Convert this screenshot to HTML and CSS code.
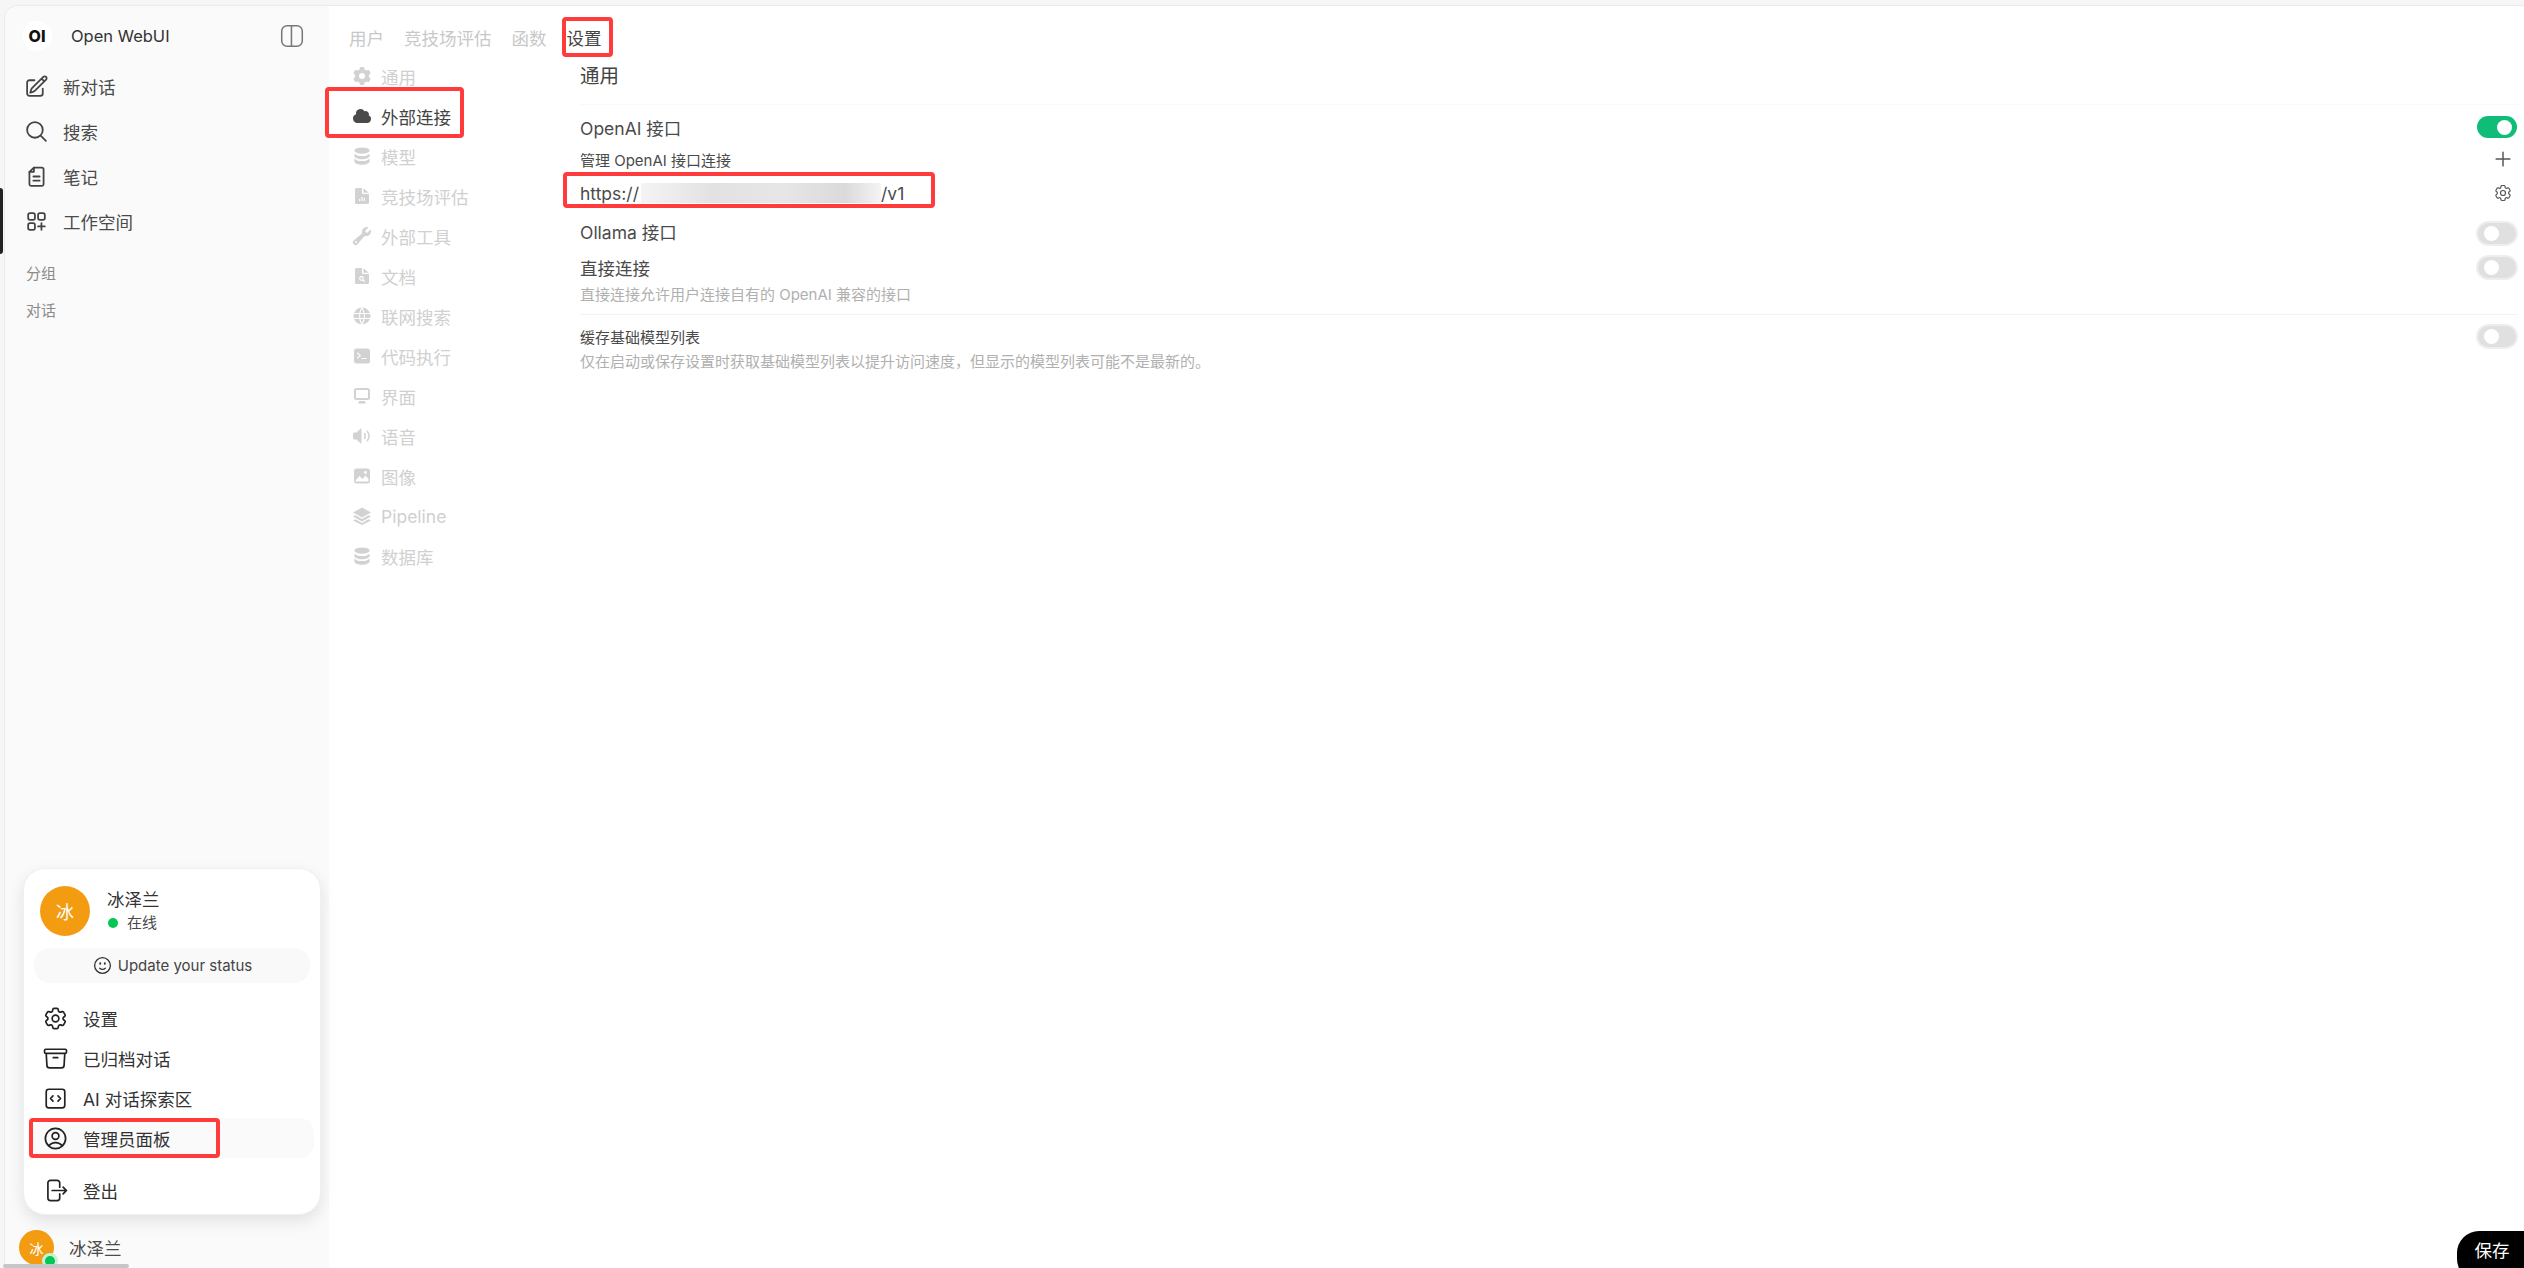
FILE: index.html
```html
<!DOCTYPE html>
<html lang="zh-CN">
<head>
<meta charset="utf-8">
<title>Open WebUI</title>
<link rel="stylesheet" href="styles.css">
</head>
<body>
<svg class="defs" width="0" height="0" aria-hidden="true">
  <symbol id="o-cog" viewBox="0 0 24 24"><path d="M9.594 3.94c.09-.542.56-.94 1.11-.94h2.593c.55 0 1.02.398 1.11.94l.213 1.281c.063.374.313.686.645.87.074.04.147.083.22.127.325.196.72.257 1.075.124l1.217-.456a1.125 1.125 0 0 1 1.37.49l1.296 2.247a1.125 1.125 0 0 1-.26 1.431l-1.003.827c-.293.241-.438.613-.43.992a7.723 7.723 0 0 1 0 .255c-.008.378.137.75.43.991l1.004.827c.424.35.534.955.26 1.43l-1.298 2.247a1.125 1.125 0 0 1-1.369.491l-1.217-.456c-.355-.133-.75-.072-1.076.124a6.47 6.47 0 0 1-.22.128c-.331.183-.581.495-.644.869l-.213 1.281c-.09.543-.56.94-1.11.94h-2.594c-.55 0-1.019-.398-1.11-.94l-.213-1.281c-.062-.374-.312-.686-.644-.87a6.52 6.52 0 0 1-.22-.127c-.325-.196-.72-.257-1.076-.124l-1.217.456a1.125 1.125 0 0 1-1.369-.49l-1.297-2.247a1.125 1.125 0 0 1 .26-1.431l1.004-.827c.292-.24.437-.613.43-.991a6.932 6.932 0 0 1 0-.255c.007-.38-.138-.751-.43-.992l-1.004-.827a1.125 1.125 0 0 1-.26-1.43l1.297-2.247a1.125 1.125 0 0 1 1.37-.491l1.216.456c.356.133.751.072 1.076-.124.072-.044.146-.086.22-.128.332-.183.582-.495.644-.869l.214-1.28Z"/><path d="M15 12a3 3 0 1 1-6 0 3 3 0 0 1 6 0Z"/></symbol>
  <symbol id="s-db" viewBox="0 0 20 20"><ellipse cx="10" cy="4.6" rx="7.6" ry="3.2"/><path d="M2.4 7.4c1.2 1.7 4 2.6 7.6 2.6s6.4-.9 7.6-2.6v2.5c0 1.8-3.4 3.3-7.6 3.3s-7.6-1.5-7.6-3.3Z"/><path d="M2.4 12.4c1.2 1.7 4 2.6 7.6 2.6s6.4-.9 7.6-2.6v3c0 1.8-3.4 3.3-7.6 3.3s-7.6-1.5-7.6-3.3Z"/></symbol>
  <symbol id="s-doc" viewBox="0 0 20 20"><path d="M3 3.5A1.5 1.5 0 0 1 4.5 2h5.5v4.5A1.5 1.5 0 0 0 11.500 8H17v8.500a1.500 1.500 0 0 1-1.500 1.500h-11A1.500 1.500 0 0 1 3 16.500Z"/><path d="M11.500 2.300 16.700 6.700H11.500Z"/></symbol>
</svg>

<div class="scrollbar"></div>
<div class="edge-bar"></div>

<div class="shell">
  <aside class="sidebar">
    <header class="brand">
      <span class="logo">OI</span>
      <span class="brand-name">Open WebUI</span>
      <svg class="panel-icon" viewBox="0 0 24 24" fill="none" stroke="#777" stroke-width="1.4"><rect x="2.500" y="2.500" width="19" height="19" rx="5"/><path d="M11.500 2.500v19"/></svg>
    </header>
    <nav class="side-nav">
      <a class="side-link"><svg class="side-icon" viewBox="0 0 24 24"><path d="m16.862 4.487 1.687-1.688a1.875 1.875 0 1 1 2.652 2.652L10.582 16.07a4.500 4.500 0 0 1-1.897 1.13L6 18l.8-2.685a4.500 4.500 0 0 1 1.130-1.897l8.932-8.931Zm0 0L19.500 7.125M18 14v4.750A2.250 2.250 0 0 1 15.750 21H5.250A2.250 2.250 0 0 1 3 18.750V8.250A2.250 2.250 0 0 1 5.250 6H10"/></svg>新对话</a>
      <a class="side-link"><svg class="side-icon" viewBox="0 0 24 24"><path d="m21 21-5.197-5.197m0 0A7.500 7.500 0 1 0 5.196 5.196a7.500 7.500 0 0 0 10.607 10.607Z"/></svg>搜索</a>
      <a class="side-link"><svg class="side-icon" viewBox="0 0 24 24"><path d="M9.500 3.500H17a1.800 1.800 0 0 1 1.800 1.800v14a1.800 1.800 0 0 1-1.800 1.800H7a1.800 1.800 0 0 1-1.800-1.800V7.500ZM9 12h6M9 16h6"/><path d="M9.500 3.500V7.500H5.200"/></svg>笔记</a>
      <a class="side-link"><svg class="side-icon" viewBox="0 0 24 24"><rect x="4" y="4" width="6.500" height="6.500" rx="1.800"/><rect x="13.500" y="4" width="6.500" height="6.500" rx="1.800"/><rect x="4" y="13.500" width="6.500" height="6.500" rx="1.800"/><path d="M16.750 13.500V20M13.500 16.750H20"/></svg>工作空间</a>
    </nav>
    <div class="side-label first">分组</div>
    <div class="side-label">对话</div>
    <footer class="side-user">
      <span class="avatar-small">冰<i class="avatar-dot"></i></span>
      <span>冰泽兰</span>
    </footer>

    <div class="user-menu">
      <div class="menu-head">
        <span class="avatar-large">冰</span>
        <div class="menu-id">
          <div class="menu-name">冰泽兰</div>
          <div class="menu-status"><i class="status-dot"></i>在线</div>
        </div>
      </div>
      <div class="status-btn"><svg class="status-icon" viewBox="0 0 24 24"><path d="M15.182 15.182a4.500 4.500 0 0 1-6.364 0M21 12a9 9 0 1 1-18 0 9 9 0 0 1 18 0ZM9.750 9.750c0 .414-.168.750-.375.750S9 10.164 9 9.750 9.168 9 9.375 9s.375.336.375.750Zm5.250 0c0 .414-.168.750-.375.750s-.375-.336-.375-.750.168-.750.375-.750.375.336.375.750Z"/></svg>Update your status</div>
      <div class="menu-list">
        <a class="menu-item"><svg class="menu-icon"><use href="#o-cog"/></svg>设置</a>
        <a class="menu-item"><svg class="menu-icon" viewBox="0 0 24 24"><path d="m20.250 7.500-.625 10.632a2.250 2.250 0 0 1-2.247 2.118H6.622a2.250 2.250 0 0 1-2.247-2.118L3.750 7.500M10 11.250h4M3.375 7.500h17.250c.621 0 1.125-.504 1.125-1.125v-1.500c0-.621-.504-1.125-1.125-1.125H3.375c-.621 0-1.125.504-1.125 1.125v1.500c0 .621.504 1.125 1.125 1.125Z"/></svg>已归档对话</a>
        <a class="menu-item"><svg class="menu-icon" viewBox="0 0 24 24"><path d="M14.250 9.750 16.500 12l-2.250 2.250m-4.500 0L7.500 12l2.250-2.250M6 20.250h12A2.250 2.250 0 0 0 20.250 18V6A2.250 2.250 0 0 0 18 3.750H6A2.250 2.250 0 0 0 3.750 6v12A2.250 2.250 0 0 0 6 20.250Z"/></svg>AI 对话探索区</a>
        <a class="menu-item hover"><svg class="menu-icon" viewBox="0 0 24 24"><path d="M17.982 18.725A7.488 7.488 0 0 0 12 15.750a7.488 7.488 0 0 0-5.982 2.975m11.963 0a9 9 0 1 0-11.963 0m11.963 0A8.966 8.966 0 0 1 12 21a8.966 8.966 0 0 1-5.982-2.275M15 9.750a3 3 0 1 1-6 0 3 3 0 0 1 6 0Z"/></svg>管理员面板</a>
        <a class="menu-item logout"><svg class="menu-icon" viewBox="0 0 24 24"><path d="M15.750 9V5.250A2.250 2.250 0 0 0 13.500 3h-6a2.250 2.250 0 0 0-2.250 2.250v13.500A2.250 2.250 0 0 0 7.500 21h6a2.250 2.250 0 0 0 2.250-2.250V15m3 0 3-3m0 0-3-3m3 3H9"/></svg>登出</a>
      </div>
    </div>
  </aside>

  <main class="main">
    <nav class="tabs">
      <a class="tab">用户</a>
      <a class="tab">竞技场评估</a>
      <a class="tab">函数</a>
      <a class="tab active">设置</a>
    </nav>
    <div class="settings">
      <nav class="settings-nav">
        <a class="set-link"><svg class="set-icon" viewBox="0 0 20 20"><path fill-rule="evenodd" d="M7.840 1.804A1 1 0 0 1 8.820 1h2.360a1 1 0 0 1 .98.804l.331 1.652a6.993 6.993 0 0 1 1.929 1.115l1.598-.54a1 1 0 0 1 1.186.447l1.180 2.044a1 1 0 0 1-.205 1.251l-1.267 1.113a7.047 7.047 0 0 1 0 2.228l1.267 1.113a1 1 0 0 1 .206 1.250l-1.180 2.045a1 1 0 0 1-1.187.447l-1.598-.54a6.993 6.993 0 0 1-1.929 1.115l-.33 1.652a1 1 0 0 1-.98.804H8.820a1 1 0 0 1-.98-.804l-.331-1.652a6.993 6.993 0 0 1-1.929-1.115l-1.598.54a1 1 0 0 1-1.186-.447l-1.180-2.044a1 1 0 0 1 .205-1.251l1.267-1.114a7.050 7.050 0 0 1 0-2.227L1.821 7.773a1 1 0 0 1-.206-1.250l1.180-2.045a1 1 0 0 1 1.187-.447l1.598.54A6.992 6.992 0 0 1 7.510 3.456l.33-1.652ZM10 13a3 3 0 1 0 0-6 3 3 0 0 0 0 6Z"/></svg>通用</a>
        <a class="set-link active"><svg class="set-icon" viewBox="0 0 20 20"><path d="M1 12.500A4.500 4.500 0 0 0 5.500 17H15a4 4 0 0 0 1.866-7.539 3.504 3.504 0 0 0-4.504-4.272A4.500 4.500 0 0 0 4.060 8.235 4.502 4.502 0 0 0 1 12.500Z"/></svg>外部连接</a>
        <a class="set-link"><svg class="set-icon"><use href="#s-db"/></svg>模型</a>
        <a class="set-link"><svg class="set-icon" viewBox="0 0 20 20"><use href="#s-doc"/><path class="cut" d="M7 15v-2h1.200v2ZM9.400 15v-4h1.200v4ZM11.800 15v-3H13v3Z"/></svg>竞技场评估</a>
        <a class="set-link"><svg class="set-icon" viewBox="0 0 20 20"><path fill-rule="evenodd" d="M19 5.500a4.500 4.500 0 0 1-4.791 4.490c-.873-.055-1.808.128-2.368.8l-6.024 7.230a2.724 2.724 0 1 1-3.837-3.837L9.210 8.160c.672-.56.855-1.495.8-2.368a4.500 4.500 0 0 1 5.873-4.575c.324.105.39.51.15.752L13.340 4.660a.455.455 0 0 0-.11.494 3.010 3.010 0 0 0 1.617 1.617c.17.07.363.02.493-.111l2.692-2.692c.241-.241.647-.174.752.15.14.435.216.9.216 1.382ZM4 17a1 1 0 1 0 0-2 1 1 0 0 0 0 2Z"/></svg>外部工具</a>
        <a class="set-link"><svg class="set-icon" viewBox="0 0 20 20"><use href="#s-doc"/><circle class="cut-ring" cx="9.500" cy="12.500" r="1.800"/><path class="cut-line" d="m11 14 1.500 1.500"/></svg>文档</a>
        <a class="set-link"><svg class="set-icon" viewBox="0 0 20 20"><circle cx="10" cy="10" r="8.500"/><path class="cut-line" d="M2 7.500h16M2 12.500h16M10 1.500c-3.200 5-3.200 12 0 17M10 1.500c3.200 5 3.200 12 0 17"/></svg>联网搜索</a>
        <a class="set-link"><svg class="set-icon" viewBox="0 0 20 20"><rect x="2" y="2.500" width="16" height="15" rx="2.500"/><path class="cut-line" d="m5.500 7 2.800 2.500-2.800 2.500M10 12.500h4"/></svg>代码执行</a>
        <a class="set-link"><svg class="set-icon" viewBox="0 0 20 20"><path fill-rule="evenodd" d="M4.500 2A2.500 2.500 0 0 0 2 4.500v7A2.500 2.500 0 0 0 4.500 14h11a2.500 2.500 0 0 0 2.500-2.500v-7A2.500 2.500 0 0 0 15.500 2ZM4.500 4h11a.5.5 0 0 1 .5.5v7a.5.5 0 0 1-.5.5h-11a.5.5 0 0 1-.5-.5v-7a.5.5 0 0 1 .5-.5Z"/><path d="M7 15h6l.8 2.500H6.200Z"/></svg>界面</a>
        <a class="set-link"><svg class="set-icon" viewBox="0 0 20 20"><path d="M9.500 3.200v13.600c0 .6-.7.9-1.100.5L4.500 13.500H2.500A1.500 1.500 0 0 1 1 12V8a1.500 1.500 0 0 1 1.500-1.500h2l3.900-3.800c.4-.4 1.100-.1 1.100.5Z"/><path class="speaker-wave" d="M12.500 7.500c1 1.500 1 3.500 0 5M15.300 5.200c2.200 3 2.200 6.600 0 9.600"/></svg>语音</a>
        <a class="set-link"><svg class="set-icon" viewBox="0 0 20 20"><rect x="2" y="2.500" width="16" height="15" rx="2.500"/><path class="cut" d="M3.500 14.500 7.500 10l3 3 3-3.500 3 3.500v2.500h-13Z"/><circle class="cut" cx="13.500" cy="6.500" r="1.400"/></svg>图像</a>
        <a class="set-link"><svg class="set-icon" viewBox="0 0 20 20"><path d="M10 1.500 19 6.500 10 11.500 1 6.500Z"/><path d="m3.500 9.300 6.500 3.600 6.500-3.600L19 10.500 10 15.500 1 10.500Z"/><path d="m3.500 13.300 6.500 3.600 6.500-3.600L19 14.500 10 19 1 14.500Z"/></svg>Pipeline</a>
        <a class="set-link"><svg class="set-icon"><use href="#s-db"/></svg>数据库</a>
      </nav>

      <section class="panel">
        <h2 class="panel-title">通用</h2>
        <hr class="rule">
        <div class="row row-openai">
          <span>OpenAI 接口</span>
          <span class="toggle on"><i></i></span>
        </div>
        <div class="row row-manage">
          <span class="small">管理 OpenAI 接口连接</span>
          <svg class="action-icon" viewBox="0 0 24 24"><path d="M12 4.500v15m7.500-7.500h-15"/></svg>
        </div>
        <div class="row row-url">
          <span class="url">https://<span class="masked"></span>/v1</span>
          <svg class="action-icon gear"><use href="#o-cog"/></svg>
        </div>
        <div class="row row-ollama">
          <span>Ollama 接口</span>
          <span class="toggle"><i></i></span>
        </div>
        <div class="row row-direct">
          <span>直接连接</span>
          <span class="toggle"><i></i></span>
        </div>
        <p class="hint hint-direct">直接连接允许用户连接自有的 OpenAI 兼容的接口</p>
        <hr class="rule rule-second">
        <div class="row row-cache">
          <span class="small">缓存基础模型列表</span>
          <span class="toggle"><i></i></span>
        </div>
        <p class="hint hint-cache">仅在启动或保存设置时获取基础模型列表以提升访问速度，但显示的模型列表可能不是最新的。</p>
      </section>
    </div>
    <button class="save">保存</button>
  </main>
</div>

<div class="mark mark-tab"></div>
<div class="mark mark-nav"></div>
<div class="mark mark-url"></div>
<div class="mark mark-admin"></div>
</body>
</html>
```

FILE: styles.css
```css
* { box-sizing: border-box; }
html, body { margin: 0; height: 100%; }
body {
  position: relative;
  width: 2524px;
  height: 1268px;
  overflow: hidden;
  background: #f6f6f6;
  color: #4a4a4a;
  font-family: Inter, "Noto Sans CJK SC", "Noto Sans", sans-serif;
  font-size: 17.5px;
}
.defs { position: absolute; }
a { color: inherit; text-decoration: none; }

.shell {
  display: flex;
  height: 1263px;
  margin: 5px 0 0 4px;
  background: #fff;
  border-top: 1px solid #ebebeb;
  border-left: 1px solid #ebebeb;
  border-top-left-radius: 14px;
}
.sidebar {
  position: relative;
  display: flex;
  flex-direction: column;
  width: 324px;
  flex: none;
  background: #fafafa;
  border-top-left-radius: 14px;
}
.brand {
  display: flex;
  align-items: center;
  height: 58px;
  padding: 2px 0 0 17px;
}
.logo {
  display: flex;
  align-items: center;
  justify-content: center;
  width: 30px;
  height: 30px;
  border-radius: 50%;
  background: #fff;
  color: #111;
  font-size: 16px;
  font-weight: 800;
}
.brand-name { margin-left: 19px; color: #333; font-size: 16.5px; }
.panel-icon { width: 26px; height: 26px; margin-left: auto; margin-right: 24px; }
.side-nav { display: flex; flex-direction: column; }
.side-link {
  display: flex;
  align-items: center;
  gap: 14px;
  height: 45px;
  padding-left: 19px;
}
.side-icon {
  width: 25px;
  height: 25px;
  fill: none;
  stroke: #444;
  stroke-width: 1.7;
  stroke-linecap: round;
  stroke-linejoin: round;
}
.side-label {
  height: 37px;
  padding-left: 21px;
  line-height: 37px;
  color: #8a8a8a;
  font-size: 15px;
}
.side-label.first { margin-top: 11px; }
.side-user {
  display: flex;
  align-items: center;
  gap: 15px;
  height: 38px;
  margin-top: auto;
  padding: 0 0 3px 14px;
}
.avatar-small {
  position: relative;
  display: flex;
  align-items: center;
  justify-content: center;
  width: 35px;
  height: 35px;
  border-radius: 50%;
  background: #f39c12;
  color: #fff;
  font-size: 14px;
}
.avatar-dot {
  position: absolute;
  right: -4px;
  bottom: -4px;
  width: 16px;
  height: 16px;
  border-radius: 50%;
  background: #00c853;
  border: 3px solid #c8f0d6;
}

.user-menu {
  position: absolute;
  left: 18px;
  top: 862px;
  width: 298px;
  height: 347px;
  padding: 17px 10px 0;
  background: #fff;
  border: 1px solid #f0f0f0;
  border-radius: 22px;
  box-shadow: 0 6px 16px rgba(0,0,0,.1);
}
.menu-head { display: flex; align-items: center; gap: 17px; padding-left: 6px; }
.avatar-large {
  display: flex;
  align-items: center;
  justify-content: center;
  width: 50px;
  height: 50px;
  border-radius: 50%;
  background: #f39c12;
  color: #fff;
  font-size: 18px;
}
.menu-name { color: #333; line-height: 24px; }
.menu-status { display: flex; align-items: center; gap: 9px; font-size: 15px; line-height: 22px; }
.status-dot { width: 10px; height: 10px; margin-left: 1px; border-radius: 50%; background: #00c853; }
.status-btn {
  display: flex;
  align-items: center;
  justify-content: center;
  gap: 5px;
  height: 35px;
  margin-top: 12px;
  border-radius: 16px;
  background: #f9f9f9;
  color: #444;
  font-size: 15px;
}
.status-icon {
  width: 21px;
  height: 21px;
  fill: none;
  stroke: #333;
  stroke-width: 1.5;
  stroke-linecap: round;
  stroke-linejoin: round;
}
.menu-list { display: flex; flex-direction: column; margin: 15px -4px 0 -3px; }
.menu-item {
  display: flex;
  align-items: center;
  gap: 14px;
  height: 40px;
  padding-left: 11px;
  border-radius: 14px;
  color: #333;
}
.menu-item.hover { background: #fafafa; }
.menu-item.logout { margin-top: 12px; }
.menu-icon {
  width: 27px;
  height: 27px;
  fill: none;
  stroke: #222;
  stroke-width: 1.5;
  stroke-linecap: round;
  stroke-linejoin: round;
}

.main { position: relative; flex: 1; min-width: 0; padding-right: 6px; }
.tabs { display: flex; gap: 20px; height: 50px; padding: 15px 0 0 20px; line-height: 36px; }
.tab { color: #c8c8c8; }
.tab.active { color: #444; }
.settings { display: flex; }
.settings-nav { display: flex; flex-direction: column; flex: none; width: 251px; padding-left: 20px; }
.set-link {
  display: flex;
  align-items: center;
  gap: 9px;
  height: 40px;
  padding-left: 3px;
  color: #d0d0d0;
}
.set-link.active { color: #444; }
.set-icon { flex: none; width: 20px; height: 20px; fill: #d2d2d2; }
.set-link.active .set-icon { fill: #4a4a4a; }
.cut { fill: #fff; }
.cut-line { fill: none; stroke: #fff; stroke-width: 1.1; stroke-linecap: round; }
.cut-ring { fill: none; stroke: #fff; stroke-width: 1.2; }
.speaker-wave { fill: none; stroke: #d2d2d2; stroke-width: 1.5; stroke-linecap: round; }

.panel { flex: 1; min-width: 0; }
.panel-title { margin: 0; height: 40px; color: #444; font-size: 19.5px; font-weight: 400; line-height: 40px; }
.rule { height: 1px; margin: 8px 0 0; border: 0; background: #f9f9f9; }
.row { display: flex; align-items: center; justify-content: space-between; }
.row-openai { height: 32px; margin-top: 6px; }
.row-manage { height: 24px; margin-top: 4px; }
.row-url { height: 28px; margin-top: 8px; }
.row-ollama { height: 30px; margin-top: 9px; }
.row-ollama .toggle { align-self: flex-end; }
.row-direct { height: 28px; margin-top: 7px; }
.row-cache { height: 30px; margin-top: 6px; }
.small { font-size: 15px; }
.url { display: flex; align-items: center; }
.masked {
  width: 240px;
  height: 20px;
  margin-left: 2px;
  background: linear-gradient(90deg, #f4f4f4, #e2e2e2 30%, #e6e6e6 60%, #dadada 85%, #f4f4f4);
}
.hint { margin: 0; color: #b0b0b0; font-size: 15px; }
.hint-direct { height: 24px; margin-top: 2px; line-height: 24px; }
.rule-second { margin-top: 7px; background: #f3f3f3; }
.hint-cache { height: 22px; line-height: 22px; }
.toggle {
  display: flex;
  align-items: center;
  width: 42px;
  height: 25px;
  padding-left: 6px;
  border: 2px solid #eeeeee;
  border-radius: 13px;
  background: #e0e0e0;
}
.toggle i { width: 15px; height: 15px; border-radius: 50%; background: #fff; }
.toggle.on {
  width: 40px;
  height: 22px;
  margin-right: 1px;
  padding-left: 20px;
  border: 0;
  background: #0fbd78;
}
.action-icon {
  width: 22px;
  height: 22px;
  margin-right: 4px;
  fill: none;
  stroke: #555;
  stroke-width: 1.6;
  stroke-linecap: round;
  stroke-linejoin: round;
}
.action-icon.gear { width: 20px; height: 20px; margin-right: 5px; stroke-width: 1.4; }
.save {
  position: absolute;
  right: -20px;
  bottom: -13px;
  width: 87px;
  height: 50px;
  padding: 0 17px 13px 0;
  border: 0;
  border-radius: 22px;
  background: #000;
  color: #fff;
  font: inherit;
}

/* annotation overlays drawn on top of the screenshot */
.mark { position: absolute; border: 4px solid #ff3b3b; border-radius: 4px; pointer-events: none; }
.mark-tab { left: 562px; top: 17px; width: 51px; height: 40px; }
.mark-nav { left: 325px; top: 87px; width: 139px; height: 51px; }
.mark-url { left: 563px; top: 172px; width: 372px; height: 36px; }
.mark-admin { left: 29px; top: 1118px; width: 191px; height: 40px; }
.scrollbar { position: absolute; left: 3px; bottom: 0; z-index: 2; width: 126px; height: 4px; border-radius: 2px; background: #c6c6c6; }
.edge-bar { position: absolute; left: 0; top: 188px; z-index: 2; width: 3px; height: 66px; border-radius: 0 4px 4px 0; background: #222; }
```
